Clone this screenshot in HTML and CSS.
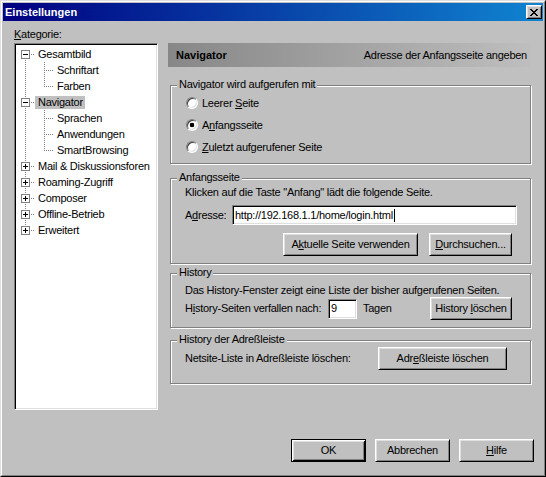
FILE: index.html
```html
<!DOCTYPE html>
<html lang="de">
<head>
<meta charset="utf-8">
<title>Einstellungen</title>
<link rel="stylesheet" href="styles.css">
</head>
<body>
<div class="window">
  <div class="frame">
    <div class="titlebar">
      <span class="title">Einstellungen</span>
      <span class="close"><svg width="8" height="7" viewBox="0 0 8 7" shape-rendering="crispEdges"><path fill="#000" d="M0 0h2v1H0zM6 0h2v1H6zM1 1h2v1H1zM5 1h2v1H5zM2 2h4v1H2zM3 3h2v1H3zM2 4h4v1H2zM1 5h2v1H1zM5 5h2v1H5zM0 6h2v1H0zM6 6h2v1H6z"/></svg></span>
    </div>
    <div class="main">
      <div class="cat-label"><u>K</u>ategorie:</div>
      <div class="tree">
        <div class="row"><span class="c t-first"><i class="box minus"></i></span><span class="lbl">Gesamtbild</span></div>
        <div class="row"><span class="c pass"></span><span class="c t-mid"></span><span class="lbl">Schriftart</span></div>
        <div class="row"><span class="c pass"></span><span class="c t-last"></span><span class="lbl">Farben</span></div>
        <div class="row"><span class="c t-mid"><i class="box minus"></i></span><span class="lbl sel">Navigator</span></div>
        <div class="row"><span class="c pass"></span><span class="c t-mid"></span><span class="lbl">Sprachen</span></div>
        <div class="row"><span class="c pass"></span><span class="c t-mid"></span><span class="lbl">Anwendungen</span></div>
        <div class="row"><span class="c pass"></span><span class="c t-last"></span><span class="lbl">SmartBrowsing</span></div>
        <div class="row"><span class="c t-mid"><i class="box plus"></i></span><span class="lbl">Mail &amp; Diskussionsforen</span></div>
        <div class="row"><span class="c t-mid"><i class="box plus"></i></span><span class="lbl">Roaming-Zugriff</span></div>
        <div class="row"><span class="c t-mid"><i class="box plus"></i></span><span class="lbl">Composer</span></div>
        <div class="row"><span class="c t-mid"><i class="box plus"></i></span><span class="lbl">Offline-Betrieb</span></div>
        <div class="row"><span class="c t-last"><i class="box plus"></i></span><span class="lbl">Erweitert</span></div>
      </div>
      <div class="panel">
        <div class="header"><b>Navigator</b><span>Adresse der Anfangsseite angeben</span></div>

        <div class="group g1">
          <span class="gtitle">Navigator wird aufgerufen mit</span>
          <div class="radios">
            <div class="radio-row"><span class="radio"></span><span>Leerer <u>S</u>eite</span></div>
            <div class="radio-row"><span class="radio on"></span><span>A<u>n</u>fangsseite</span></div>
            <div class="radio-row"><span class="radio"></span><span><u>Z</u>uletzt aufgerufener Seite</span></div>
          </div>
        </div>

        <div class="group g2">
          <span class="gtitle">Anfangsseite</span>
          <div class="gbody">
            <div class="line">Klicken auf die Taste "Anfang" lädt die folgende Seite.</div>
            <div class="addr-row">
              <span class="addr-label">A<u>d</u>resse:</span>
              <span class="field addr"><span>http://192.168.1.1/home/login.html</span><i class="caret"></i></span>
            </div>
            <div class="btn-row">
              <span class="btn w135"><span>A<u>k</u>tuelle Seite verwenden</span></span>
              <span class="btn w83"><span><u>D</u>urchsuchen...</span></span>
            </div>
          </div>
        </div>

        <div class="group g3">
          <span class="gtitle">History</span>
          <div class="gbody">
            <div class="line">Das History-Fenster zeigt eine Liste der bisher aufgerufenen Seiten.</div>
            <div class="hist-row">
              <span class="hist-label">H<u>i</u>story-Seiten verfallen nach:</span>
              <span class="field days"><span>9</span></span>
              <span class="unit">Tagen</span>
              <span class="btn w82 push"><span>History <u>l</u>öschen</span></span>
            </div>
          </div>
        </div>

        <div class="group g4">
          <span class="gtitle">History der Adreßleiste</span>
          <div class="gbody">
            <div class="bar-row">
              <span class="bar-label">Netsite-Liste in Adreßleiste löschen:</span>
              <span class="btn w129"><span>Adr<u>e</u>ßleiste löschen</span></span>
            </div>
          </div>
        </div>
      </div>
    </div>
    <div class="footer">
      <span class="btn default"><span>OK</span></span>
      <span class="btn"><span>Abbrechen</span></span>
      <span class="btn"><span><u>H</u>ilfe</span></span>
    </div>
  </div>
</div>
</body>
</html>
```

FILE: styles.css
```css
* { box-sizing: border-box; }
html, body { margin: 0; padding: 0; }
body {
  font-family: "Liberation Sans", Arial, sans-serif;
  font-size: 11px;
  letter-spacing: -0.25px;
  line-height: 13px;
  color: #000;
  background: #c0c0c0;
}
u { text-decoration: underline; text-underline-offset: 1px; }

.window {
  width: 546px;
  height: 477px;
  border: 1px solid;
  border-color: #dfdfdf #000 #000 #dfdfdf;
  background: #c0c0c0;
}
.frame {
  height: 100%;
  border: 1px solid;
  border-color: #fff #808080 #808080 #fff;
  padding: 1px;
  display: flex;
  flex-direction: column;
}

.titlebar {
  height: 18px;
  flex: none;
  display: flex;
  align-items: center;
  justify-content: space-between;
  padding: 0 1px 0 2px;
  background: linear-gradient(to right, #000080, #1084d0);
}
.title {
  color: #fff;
  font-weight: bold;
  letter-spacing: 0;
}
.close {
  width: 16px;
  height: 14px;
  background: #c0c0c0;
  border: 1px solid;
  border-color: #fff #000 #000 #fff;
  box-shadow: inset 1px 1px #dfdfdf, inset -1px -1px #808080;
  display: flex;
  align-items: center;
  justify-content: center;
  padding-right: 1px;
}
.close svg { display: block; }

.main {
  display: grid;
  grid-template-columns: 144px 363px;
  grid-template-rows: 22px 367px;
  column-gap: 10px;
  padding-left: 11px;
}
.cat-label {
  grid-column: 1;
  grid-row: 1;
  padding-top: 7px;
}

.tree {
  grid-column: 1;
  grid-row: 2;
  background: #fff;
  border: 1px solid;
  border-color: #808080 #fff #fff #808080;
  box-shadow: inset 1px 1px #000, inset -1px -1px #dfdfdf;
  padding: 2px 0 0 1px;
  --dv: repeating-linear-gradient(to bottom, #808080 0 1px, transparent 1px 2px);
  --dh: repeating-linear-gradient(to right, #808080 0 1px, transparent 1px 2px);
}
.row {
  height: 16px;
  display: flex;
  align-items: center;
}
.c {
  width: 19px;
  height: 16px;
  flex: none;
  background-repeat: no-repeat;
  align-self: stretch;
}
.pass {
  background-image: var(--dv);
  background-size: 1px 16px;
  background-position: 9px 0;
}
.t-first {
  background-image: var(--dv), var(--dh);
  background-size: 1px 8px, 10px 1px;
  background-position: 9px 8px, 9px 8px;
}
.t-mid {
  background-image: var(--dv), var(--dh);
  background-size: 1px 16px, 10px 1px;
  background-position: 9px 0, 9px 8px;
}
.t-last {
  background-image: var(--dv), var(--dh);
  background-size: 1px 9px, 10px 1px;
  background-position: 9px 0, 9px 8px;
}
.box {
  display: block;
  width: 9px;
  height: 9px;
  margin: 4px 0 0 5px;
  border: 1px solid #808080;
}
.minus {
  background: linear-gradient(#000, #000) 1px 3px / 5px 1px no-repeat, #fff;
}
.plus {
  background:
    linear-gradient(#000, #000) 1px 3px / 5px 1px no-repeat,
    linear-gradient(#000, #000) 3px 1px / 1px 5px no-repeat,
    #fff;
}
.lbl {
  height: 13px;
  padding: 0 2px 0 3px;
  white-space: nowrap;
}
.lbl.sel { background: #c0c0c0; }

.panel {
  grid-column: 2;
  grid-row: 2;
}
.header {
  height: 24px;
  display: flex;
  align-items: center;
  justify-content: space-between;
  padding: 0 4px 0 8px;
  background: linear-gradient(to right, #878787, #bebebe);
}
.header b { font-weight: bold; letter-spacing: 0; }

.group {
  margin-left: 2px;
  border: 1px solid #808080;
  box-shadow: inset 1px 1px #fff, 1px 1px #fff;
}
.gtitle {
  display: block;
  width: max-content;
  height: 13px;
  margin: -8px 0 0 6px;
  padding: 0 2px;
  background: #c0c0c0;
}
.g1 { margin-top: 18px; }
.radios { padding: 1px 0 5px 15px; }
.radio-row {
  height: 22px;
  display: flex;
  align-items: center;
  gap: 4px;
}
.radio {
  width: 12px;
  height: 12px;
  flex: none;
  border-radius: 50%;
  border: 1px solid;
  border-color: #808080 #fff #fff #808080;
  background: #fff;
  box-shadow: inset 1px 1px #404040, inset -1px -1px #dfdfdf;
}
.radio.on {
  background: radial-gradient(circle at 50% 50%, #000 0 2px, #fff 2.6px);
}

.gbody { padding-left: 14px; }
.g2 { margin-top: 14px; }
.g2 .gbody { padding-bottom: 7px; }
.g2 .line { margin-top: 2px; }
.addr-row {
  margin-top: 6px;
  height: 20px;
  display: flex;
  align-items: center;
}
.addr-label { width: 47px; flex: none; }
.field {
  height: 20px;
  background: #fff;
  border: 1px solid;
  border-color: #808080 #fff #fff #808080;
  box-shadow: inset 1px 1px #000, inset -1px -1px #dfdfdf;
  padding-left: 2px;
  display: flex;
  align-items: center;
  white-space: nowrap;
}
.addr { flex: 1; margin-right: 13px; }
.caret {
  display: block;
  width: 1px;
  height: 13px;
  background: #000;
  margin-left: 1px;
}
.btn-row {
  margin-top: 8px;
  display: flex;
  justify-content: flex-end;
  gap: 11px;
  padding-right: 18px;
}

.btn {
  height: 23px;
  width: 75px;
  flex: none;
  background: #c0c0c0;
  border: 1px solid;
  border-color: #fff #000 #000 #fff;
  box-shadow: inset 1px 1px #dfdfdf, inset -1px -1px #808080;
  display: flex;
  align-items: center;
  justify-content: center;
  white-space: nowrap;
}
.btn.default {
  border-color: #000;
  box-shadow: inset 1px 1px #fff, inset -1px -1px #000, inset 2px 2px #dfdfdf, inset -2px -2px #808080;
}
.w135 { width: 135px; }
.w83 { width: 83px; }
.w82 { width: 82px; }
.w129 { width: 129px; }

.g3 { margin-top: 9px; }
.g3 .gbody { padding-bottom: 7px; }
.g3 .line { margin-top: 5px; }
.hist-row {
  height: 23px;
  display: flex;
  align-items: center;
}
.hist-label { width: 143px; flex: none; }
.days { width: 29px; flex: none; height: 20px; }
.unit { margin-left: 6px; }
.push { margin-left: auto; margin-right: 18px; }

.g4 { margin-top: 12px; }
.g4 .gbody { padding-bottom: 13px; }
.bar-row {
  margin-top: 1px;
  height: 23px;
  display: flex;
  align-items: center;
}
.bar-label { width: 193px; flex: none; }

.footer {
  margin-top: 29px;
  display: flex;
  justify-content: flex-end;
  gap: 9px;
  padding-right: 9px;
}
```
